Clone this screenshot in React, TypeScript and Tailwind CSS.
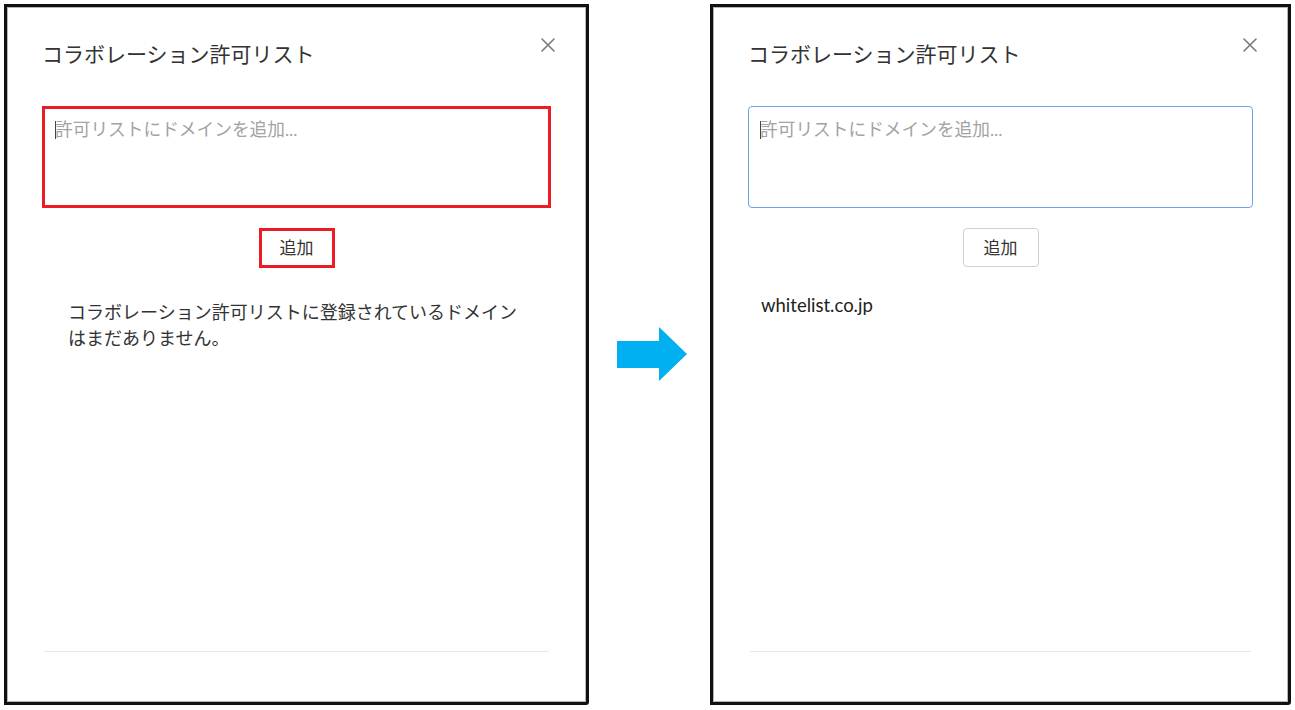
import React from "react";

const FONT = { fontFamily: 'Lato, "Noto Sans CJK JP", "Noto Sans", sans-serif' };

function CloseX() {
  return (
    <svg width="14" height="14" viewBox="0 0 14 14" className="mt-[-2px]">
      <path d="M1 1 L13 13 M13 1 L1 13" stroke="#7a7a7a" strokeWidth="1.6" strokeLinecap="round" />
    </svg>
  );
}

function Header() {
  return (
    <div className="flex items-start justify-between">
      <div className="text-[21px] leading-[28px] text-[#333333]">コラボレーション許可リスト</div>
      <div className="mr-[-4px]">
        <CloseX />
      </div>
    </div>
  );
}

function Panel({ highlighted }: { highlighted: boolean }) {
  return (
    <div
      className={
        "flex flex-col h-[701px] border-[3px] border-[#111111] bg-white shadow-[inset_0_0_0_1px_#b5b5b5] rounded-br-[3px] px-[35px] pt-[33px] " +
        (highlighted ? "w-[585px]" : "w-[581px]")
      }
    >
      <Header />
      <div className="relative mt-[38px]">
        {highlighted ? (
          <textarea
            readOnly
            placeholder="許可リストにドメインを追加..."
            className="block w-full h-[102px] resize-none border-[3px] border-[#ed1c24] pl-[10px] pt-[9px] text-[17.7px] leading-[24px] text-[#333] placeholder:text-[#a3a3a3] outline-none"
            style={FONT}
          />
        ) : (
          <textarea
            readOnly
            placeholder="許可リストにドメインを追加..."
            className="block w-full h-[102px] resize-none border border-[#6ea2ea] rounded-[4px] pl-[11px] pt-[11px] text-[17.7px] leading-[24px] text-[#333] placeholder:text-[#a3a3a3] outline-none"
            style={FONT}
          />
        )}
        <span
          className={
            "absolute w-[1px] h-[18px] bg-[#444] top-[15px] " + (highlighted ? "left-[13px]" : "left-[12px]")
          }
        />
      </div>
      <div className="flex justify-center mt-[20px]">
        {highlighted ? (
          <div className="w-[76px] h-[40px] border-[3px] border-[#ed1c24] flex items-center justify-center text-[17px] text-[#333]">
            追加
          </div>
        ) : (
          <div className="w-[76px] h-[39px] border border-[#cfcfcf] rounded-[4px] flex items-center justify-center text-[17px] text-[#333]">
            追加
          </div>
        )}
      </div>
      {highlighted ? (
        <div className="mt-[31px] px-[26px] text-[18px] leading-[26px] text-[#333]">
          コラボレーション許可リストに登録されているドメインはまだありません。
        </div>
      ) : (
        <div className="mt-[25px] px-[13px] text-[18.5px] leading-[26px] text-[#222]">whitelist.co.jp</div>
      )}
      <div className="mt-auto mx-[2px] h-px bg-[#e8e8e8] mb-[50px]" />
    </div>
  );
}

export default function App() {
  return (
    <div className="w-[1295px] h-[710px] bg-white flex items-start pt-[4px] pl-[4px]" style={FONT}>
      <Panel highlighted={true} />
      <div className="ml-[28px] mr-[23px] mt-[323px] w-[70px]">
        <svg width="70" height="54" viewBox="0 0 70 54">
          <polygon points="0,14 42,14 42,0 70,27 42,54 42,41 0,41" fill="#00b0f0" />
        </svg>
      </div>
      <Panel highlighted={false} />
    </div>
  );
}
